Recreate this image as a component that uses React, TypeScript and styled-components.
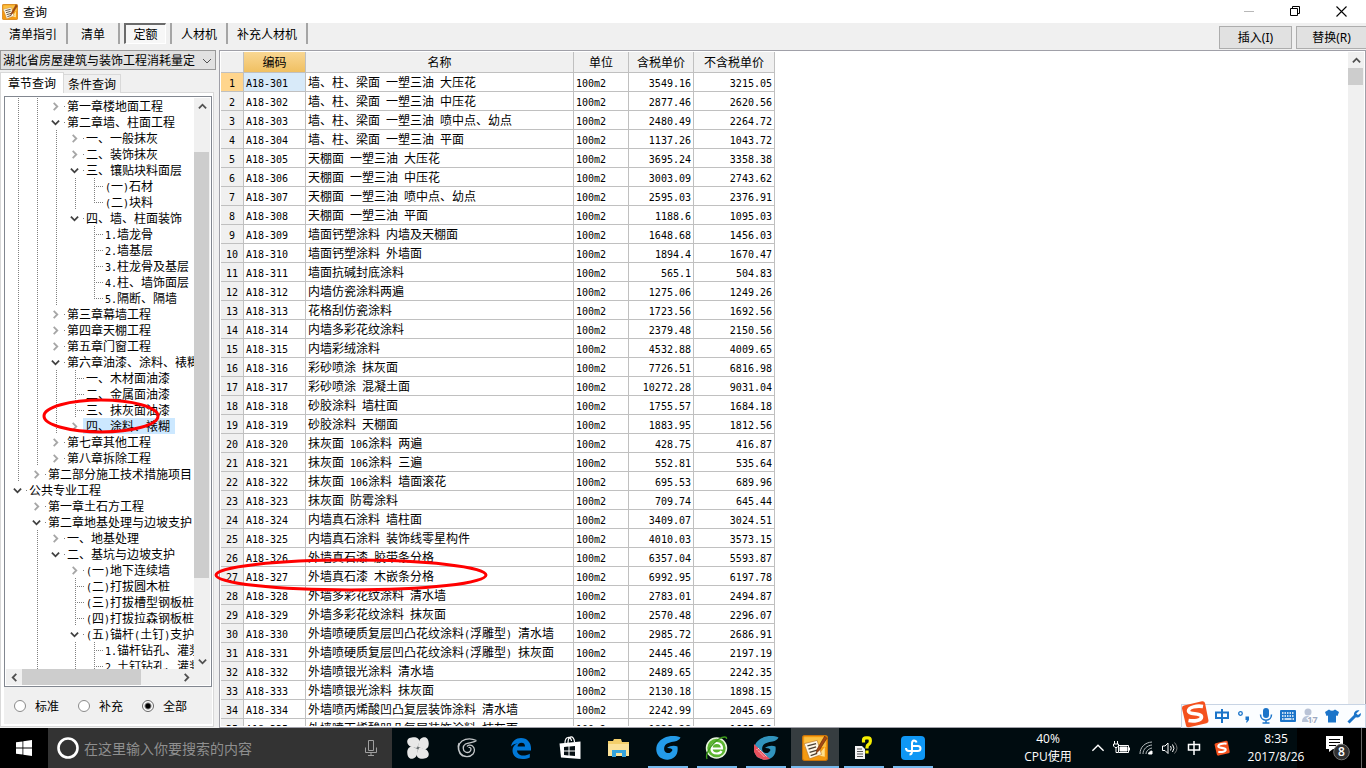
import React from "react";
import styled, { createGlobalStyle, css } from "styled-components";

const GlobalStyle = createGlobalStyle`
  * { box-sizing: border-box; }
  body { margin: 0; overflow: hidden; background: #f0f0f0; }
  button, input, select { font: inherit; color: inherit; margin: 0; }
`;

const Screen = styled.div`
  position: relative;
  display: flex;
  flex-direction: column;
  height: 100vh;
  overflow: hidden;
  color: #000;
  font-family: "Noto Sans CJK SC", sans-serif;
  font-size: 12px;
  line-height: 18px;
`;

const Latin = styled.span`
  font-family: "DejaVu Sans Mono", monospace;
  font-size: 10px;
  line-height: 10px;
  white-space: pre;
`;

/* Latin runs are set in a half-width face beside full-width Chinese. */
function Mixed({ text }: { text: string }) {
  return (
    <>
      {text.split(/([\x20-\x7e]+)/).map((part, i) =>
        i % 2 ? <Latin key={i}>{part}</Latin> : part
      )}
    </>
  );
}

/* ---------- title bar ---------- */

const TitleBar = styled.header`
  display: flex;
  align-items: center;
  flex: none;
  height: 23px;
  padding: 0 2px;
  gap: 5px;
  background: #fff;
`;

const Title = styled.h1`
  flex: 1;
  margin: 0;
  font-size: 12px;
  font-weight: 400;
  line-height: 22px;
`;

const WindowButtons = styled.div`
  display: flex;
`;

const WindowButton = styled.button`
  display: grid;
  place-items: center;
  width: 46px;
  height: 20px;
  padding: 0;
  border: 0;
  background: transparent;
`;

/* ---------- toolbar ---------- */

const Toolbar = styled.nav`
  display: flex;
  flex: none;
  height: 27px;
  background: #f0f0f0;
`;

const ToolTabs = styled.div`
  display: flex;
  flex: 1;
  height: 21px;
`;

const ToolCell = styled.div`
  display: flex;
  min-width: 52px;
  padding: 0 4px;
  border-right: 2px solid #a5a5a5;
`;

const ToolTab = styled.button<{ $pressed?: boolean }>`
  flex: 1;
  padding: 0 4px;
  border: 1px solid transparent;
  background: transparent;
  line-height: 18px;
  ${(p) =>
    p.$pressed &&
    css`
      border: 1px solid #fff;
      border-top: 2px solid #6b6b6b;
      border-left: 2px solid #6b6b6b;
      background: #f7f7f7;
    `}
`;

const Actions = styled.div`
  display: flex;
  gap: 4px;
  padding-top: 3px;
`;

const ActionButton = styled.button<{ $flush?: boolean }>`
  width: ${(p) => (p.$flush ? "70px" : "73px")};
  height: 23px;
  padding: 0;
  border: 1px solid #adadad;
  ${(p) => p.$flush && "border-right: 0;"}
  background: #e1e1e1;
  font-family: "Noto Sans", "Noto Sans CJK SC", sans-serif;
`;

/* ---------- main split ---------- */

const Main = styled.main`
  display: flex;
  flex: 1;
  min-height: 0;
`;

const Side = styled.aside`
  display: flex;
  flex-direction: column;
  flex: none;
  width: 219px;
  padding-right: 3px;
`;

const Combo = styled.div`
  display: flex;
  flex: none;
  position: relative;
  height: 20px;
  svg {
    position: absolute;
    right: 4px;
    top: 6px;
    pointer-events: none;
  }
`;

const Select = styled.select`
  appearance: none;
  width: 100%;
  padding: 0 18px 0 2px;
  border: 1px solid #999;
  border-radius: 0;
  background: #e1e1e1;
  line-height: 18px;
`;

const TabStrip = styled.div`
  display: flex;
  align-items: flex-end;
  flex: none;
  height: 23px;
  padding-top: 2px;
`;

const SideTab = styled.button<{ $active?: boolean }>`
  position: relative;
  height: ${(p) => (p.$active ? "21px" : "19px")};
  padding: 0 7px;
  border: 1px solid #d9d9d9;
  border-bottom: 0;
  background: ${(p) => (p.$active ? "#fff" : "#f0f0f0")};
  line-height: 18px;
  ${(p) => p.$active && "z-index: 1;"}
  ${(p) => !p.$active && "border-left: 0; padding: 0 4px;"}
`;

const Pane = styled.section`
  display: flex;
  flex-direction: column;
  flex: 1;
  min-height: 0;
  margin: -1px 2px 1px 0;
  padding: 3px 1px 2px 3px;
  border: 1px solid #d9d9d9;
  background: #fff;
`;

const TreeBox = styled.div`
  display: grid;
  grid-template: minmax(0, 1fr) 16px / minmax(0, 1fr) 16px;
  flex: 1;
  min-height: 0;
  padding: 1px;
  border: 1px solid #828790;
  background: #fff;
`;

const TreeList = styled.ul`
  margin: 0;
  padding: 0 0 0 3px;
  list-style: none;
  overflow: hidden;
`;

const TreeRow = styled.li`
  display: flex;
  height: 16px;
  line-height: 16px;
  white-space: nowrap;
`;

type Kind = "blank" | "line" | "tee" | "elbow" | "node";

const vertical =
  "repeating-linear-gradient(#808080 0 1px, transparent 1px 2px) 9px 0 / 1px 16px no-repeat";
const half =
  "repeating-linear-gradient(#808080 0 1px, transparent 1px 2px) 9px 0 / 1px 9px no-repeat";
const across =
  "repeating-linear-gradient(90deg, #808080 0 1px, transparent 1px 2px) 9px 8px / 9px 1px no-repeat";
const dot = "linear-gradient(#808080, #808080) 17px 8px / 1px 1px no-repeat";

const guides: Record<Kind, string> = {
  blank: "none",
  line: vertical,
  tee: `${vertical}, ${across}`,
  elbow: `${half}, ${across}`,
  node: dot,
};

const Guide = styled.span<{ $kind: Kind }>`
  display: grid;
  place-items: center;
  flex: none;
  width: 19px;
  height: 16px;
  padding-right: 2px;
  background: ${(p) => guides[p.$kind]};
`;

const TreeLabel = styled.span<{ $selected?: boolean }>`
  margin-left: -2px;
  padding: 0 5px 0 3px;
  background: ${(p) => (p.$selected ? "#cce8ff" : "transparent")};
`;

const ScrollBar = styled.div<{ $horizontal?: boolean }>`
  display: flex;
  flex-direction: ${(p) => (p.$horizontal ? "row" : "column")};
  background: #f0f0f0;
`;

const ScrollButton = styled.button`
  display: grid;
  place-items: center;
  flex: none;
  width: 16px;
  height: 16px;
  padding: 0;
  border: 0;
  background: transparent;
`;

const Spacer = styled.div<{ $grow: number }>`
  flex: ${(p) => p.$grow} 1 0;
`;

const Thumb = styled.div<{ $grow: number; $trim?: boolean }>`
  flex: ${(p) => p.$grow} 1 0;
  ${(p) => p.$trim && "margin-right: 1px;"}
  background: #cdcdcd;
`;

const Corner = styled.div`
  background: #f0f0f0;
`;

const Filters = styled.div`
  display: flex;
  flex: none;
  height: 37px;
  padding-left: 10px;
  background: #f0f0f0;
`;

const RadioLabel = styled.label`
  display: flex;
  align-items: center;
  gap: 9px;
  width: 64px;
`;

const Radio = styled.input`
  appearance: none;
  width: 12px;
  height: 12px;
  border: 1px solid #8a8a8a;
  border-radius: 50%;
  background: #fff;
  &:checked {
    border-color: #666;
    background: radial-gradient(circle, #000 0 2px, #fff 4px);
  }
`;

/* ---------- data grid ---------- */

const GridFrame = styled.section`
  display: flex;
  flex: 1;
  min-width: 0;
  padding: 1px;
  border: 1px solid #a0a0a8;
  background: #fff;
  overflow: hidden;
`;

const GridBody = styled.div`
  flex: 1;
  min-width: 0;
  overflow: hidden;
`;

const Table = styled.table`
  table-layout: fixed;
  width: 554px;
  border-collapse: separate;
  border-spacing: 0;
`;

const Col = styled.col<{ $w: number }>`
  width: ${(p) => p.$w}px;
`;

const HeadCell = styled.th<{ $active?: boolean }>`
  height: 21px;
  padding: 0;
  border-right: 1px solid #c0c0c0;
  border-bottom: 1px solid #c0c0c0;
  background: ${(p) => (p.$active ? "linear-gradient(#f9d793, #f0c062)" : "#f0f0f0")};
  font-weight: 400;
`;

const RowHead = styled.th<{ $active?: boolean }>`
  height: 19px;
  padding: 0;
  border-right: 1px solid #c0c0c0;
  border-bottom: 1px solid #c0c0c0;
  background: ${(p) => (p.$active ? "#ffd58d" : "#f0f0f0")};
  font-weight: 400;
  line-height: 16px;
`;

const Cell = styled.td<{ $right?: boolean; $active?: boolean }>`
  height: 19px;
  padding: 0 2px;
  border-right: 1px solid #c0c0c0;
  border-bottom: 1px solid #c0c0c0;
  background: ${(p) => (p.$active ? "#d8eaf9" : "#fff")};
  text-align: ${(p) => (p.$right ? "right" : "left")};
  line-height: 16px;
  white-space: nowrap;
  overflow: hidden;
`;

/* ---------- overlays ---------- */

const Marks = styled.svg`
  position: absolute;
  left: 0;
  top: 0;
  pointer-events: none;
`;

const ImeBar = styled.div`
  position: absolute;
  right: 0;
  bottom: 40px;
  display: flex;
  align-items: center;
  height: 24px;
  padding-left: 29px;
  border: 1px solid #c8d4e4;
  background: #fbfdff;
`;

const ImeLogo = styled.span`
  position: absolute;
  left: -1px;
  bottom: -1px;
  display: flex;
`;

const ImeItem = styled.button`
  display: grid;
  place-items: center;
  width: 22px;
  height: 22px;
  padding: 0;
  border: 0;
  background: transparent;
`;

/* ---------- taskbar ---------- */

const TaskBar = styled.footer`
  display: flex;
  flex: none;
  height: 40px;
  background: linear-gradient(to left, #000 69px, #000c10 69px);
  color: #fff;
`;

const StartButton = styled.button`
  display: grid;
  place-items: center;
  width: 48px;
  padding: 0;
  border: 0;
  background: #000;
`;

const SearchBox = styled.label`
  display: flex;
  align-items: center;
  width: 344px;
  padding: 0 14px 0 8px;
  gap: 4px;
  background: #333;
`;

const SearchInput = styled.input`
  flex: 1;
  min-width: 0;
  padding: 0;
  border: 0;
  outline: 0;
  background: transparent;
  font-size: 14px;
  &::placeholder {
    color: #8f8f8f;
    opacity: 1;
  }
`;

const AppGroup = styled.div<{ $before: number }>`
  display: flex;
  gap: 1px;
  margin-left: ${(p) => p.$before}px;
`;

const AppButton = styled.button<{ $running?: boolean; $active?: boolean }>`
  display: flex;
  flex-direction: column;
  align-items: center;
  width: 48px;
  height: 40px;
  padding: 7px 0 0;
  gap: 5px;
  border: 0;
  background: ${(p) => (p.$active ? "#363d40" : "transparent")};
  &::after {
    content: "";
    width: ${(p) => (p.$active ? "48px" : "40px")};
    height: 2px;
    background: ${(p) => (p.$running || p.$active ? "#76b9ed" : "transparent")};
  }
  svg {
    flex: none;
  }
`;

const Tray = styled.div`
  display: flex;
  flex: 1;
  justify-content: flex-end;
  font-family: "Open Sans", "Noto Sans CJK SC", sans-serif;
`;

const TrayText = styled.div<{ $w: number }>`
  width: ${(p) => p.$w}px;
  padding-top: 2px;
  text-align: center;
`;

const TrayButton = styled.button<{ $w?: number }>`
  display: grid;
  place-items: center;
  width: ${(p) => p.$w ?? 24}px;
  padding: 0;
  border: 0;
  background: transparent;
`;

const ShowDesktop = styled.button`
  width: 5px;
  padding: 0;
  border: 0;
  border-left: 1px solid #666;
  background: #000;
`;

/* ---------- icons ---------- */

type Dir = "up" | "down" | "left" | "right";
const turns: Record<Dir, number> = { up: 180, down: 0, left: 90, right: 270 };

function Chevron({ dir, color = "#505050", size = 9, weight = 2 }: { dir: Dir; color?: string; size?: number; weight?: number }) {
  return (
    <svg width={size} height={size} viewBox="0 0 10 10" aria-hidden>
      <path d="M1 3l4 4 4-4" fill="none" stroke={color} strokeWidth={weight} transform={`rotate(${turns[dir]} 5 5)`} />
    </svg>
  );
}

function NotePad({ size }: { size: number }) {
  return (
    <svg width={size} height={size} viewBox="0 0 24 24" aria-hidden>
      <rect x="0.5" y="0.5" width="23" height="23" rx="2" fill="#f59a10" stroke="#c8730a" />
      <rect x="2" y="2" width="20" height="9" fill="#fbc043" />
      <path d="M15 19l6-8v9z" fill="#ffe08a" />
      <path d="M2 8l12-3 4 13-11 4z" fill="#fff8e6" stroke="#b9762a" strokeWidth="0.6" />
      <path d="M5 10l8-2M6 13l7-2M7 16l7-2M8 19l6-2" stroke="#4a4035" strokeWidth="1.3" />
      <path d="M21 1l-7 12-1 4 3-3 7-11z" fill="#a54814" stroke="#6b2a08" strokeWidth="0.6" />
    </svg>
  );
}

function SogouLogo({ size }: { size: number }) {
  return (
    <svg width={size} height={size} viewBox="0 0 28 28" aria-hidden>
      <path d="M3 5.5L21 1.2Q23.400 0.800 24 3L27.500 20.500Q27.800 22.600 25.500 23.300L8 27.300Q5.500 27.700 5 25.500L1 8.500Q0.600 6.200 3 5.500z" fill="#f4511e" />
      <path d="M22 6.500C16 5.500 7.500 7 7.500 11C7.500 15 20.500 12.500 20.500 17C20.500 20.500 13 21.500 7.500 20.500" fill="none" stroke="#fff" strokeWidth="3.600" />
    </svg>
  );
}

function Swirl({ color, children }: { color: string; children?: React.ReactNode }) {
  return (
    <svg width="26" height="26" viewBox="0 0 26 26" aria-hidden>
      <path
        d="M25.500 2.500C21 0.500 14 0.500 9 3C3 6 0.500 11 1.500 16.500C2.500 22 8 25.500 14 24.500C20.500 23.500 23.500 18.500 22.500 11.500C19.500 10 15 10.500 12 13C15 12.800 17 13.500 17.500 15C16.500 17.200 14.500 18.500 12.500 18C9.500 17.500 8.500 14.500 9.500 11.500C11 8 15.500 7 19.500 6.500C22.500 6 24.500 4.500 25.500 2.500z"
        fill={color}
      />
      {children}
    </svg>
  );
}

function PinwheelIcon() {
  return (
    <svg width="26" height="26" viewBox="0 0 26 26" fill="#e8e8e8" aria-hidden>
      {[0, 90, 180, 270].map((a) => (
        <path key={a} d="M12.600 12.800C8 13.300 3 11.500 2.300 7.500C1.800 4 4.500 2.500 8 2.300C12 2 14.600 4 14.300 7C14 9 12.800 10 12.600 12.800z" transform={`rotate(${a} 13 13)`} />
      ))}
    </svg>
  );
}

function OutlineSwirlIcon() {
  return (
    <svg width="26" height="26" viewBox="0 0 26 26" fill="none" stroke="#c4c8ca" strokeWidth="1.300" aria-hidden>
      <path d="M22.500 5.500C18 3.500 12 3.500 8 6C4 9 3.500 14.500 6.500 18.500C9.500 22.500 16 22.500 19 19C21 16.500 21 13 18.500 11C16.500 9.500 14 10 13 11.500M22.500 5.500C20 8 15 7 11.500 9C8.500 11 8.500 15.500 11.500 17C14 18.200 17 17 17 14C17 13 16 12 14.500 12.500M5 8C3.500 11 4 18 8.500 21" />
    </svg>
  );
}

function EdgeIcon() {
  return (
    <svg width="26" height="26" viewBox="0 0 26 26" aria-hidden>
      <path d="M3 11.500C4 6 8 3 13 3C19.500 3 23 8 23 13V15.500H9C9.300 19 12 20.500 15 20.500C18 20.500 20 19.700 21.800 18.700V22.500C19.500 23.700 17 24 14.500 24C8.500 24 4.500 20.500 4.500 15.500C4.500 12 6.500 9.300 10 8.200C7 8.500 4.500 9.700 3 11.500zM9.500 11.500H17C17 9.500 16 7.800 13.500 7.800C11.300 7.800 9.800 9.200 9.500 11.500z" fill="#0078d7" />
    </svg>
  );
}

function StoreIcon() {
  return (
    <svg width="26" height="26" viewBox="0 0 26 26" aria-hidden>
      <path d="M8 8C8 1 14 1 14.500 6M11 8C11 0 17 0 17.500 7" fill="none" stroke="#fff" strokeWidth="1.200" />
      <path d="M2.500 8.500L23.500 6.500V24L4 22.500z" fill="#fff" />
      <path d="M7 12l4.500-.5v4H7zM12.500 11.400L18 11v4.500h-5.500zM7 16.500h4.500v4L7 20zM12.500 16.500H18V21l-5.500-.5z" fill="#071014" />
    </svg>
  );
}

function FolderIcon() {
  return (
    <svg width="26" height="26" viewBox="0 0 26 26" aria-hidden>
      <path d="M2 6h5l1-2h7l1 3h7v14H2z" fill="#f3cf6b" />
      <path d="M2 9h21v12H2z" fill="#fbe299" />
      <path d="M6 22v-7h14v7h-4v-4h-6v4z" fill="#35a3dc" />
    </svg>
  );
}

function GreenBrowserIcon() {
  return (
    <svg width="26" height="26" viewBox="0 0 26 26" aria-hidden>
      <circle cx="12.500" cy="13" r="10" fill="#5cb531" stroke="#e7f5dd" strokeWidth="1.500" />
      <path d="M7.500 13.500H18C18 10 16 8 12.800 8C9.500 8 7.500 10.500 7.500 13.500C7.500 16.500 9.500 18.500 13 18.500C15 18.500 16.800 17.700 17.500 16" fill="none" stroke="#fff" strokeWidth="2.200" />
      <path d="M3 24C1 20 6 10 15 4C19 1.500 23 1 22.500 4" fill="none" stroke="#3c9a1b" strokeWidth="1.400" />
    </svg>
  );
}

function HelpDocIcon() {
  return (
    <svg width="26" height="26" viewBox="0 0 26 26" aria-hidden>
      <path d="M4 11h7l3 3v10H4z" fill="#f4f4f4" />
      <path d="M6 14h5M6 16.500h6M6 19h6M6 21.500h6" stroke="#555" strokeWidth="1" />
      <path d="M12.500 7.500V5Q12.500 2.800 15 2.800H17Q19.300 2.800 19.300 5V6.500Q19.300 8.500 17.500 9.500Q16 10.300 16 12.500V13.500M16 15.500V18.500" fill="none" stroke="#f7ef00" strokeWidth="3.200" />
    </svg>
  );
}

function BlueKnotIcon() {
  return (
    <svg width="26" height="26" viewBox="0 0 26 26" aria-hidden>
      <rect x="1" y="1" width="24" height="24" rx="4" fill="#0f97f5" />
      <path d="M16.500 7.500Q16 5.500 14 5.500Q12 5.700 12 8.500V16Q12 19.500 9.500 19.500M6 13Q6 16 9 16H17.500Q20.500 16 20.500 13.500Q20.500 11 18 11H12" fill="none" stroke="#fff" strokeWidth="2" />
    </svg>
  );
}

const blue = "#1b74c9";

/* ---------- data ---------- */

type Item = { guide: string; text: string; selected: boolean };

/* One letter per column: l line, b blank, t tee, e elbow, > closed node, v open node */
const tree: Item[] = (
  [
    ["ll>", "第一章楼地面工程"],
    ["llv", "第二章墙、柱面工程"],
    ["lll>", "一、一般抹灰"],
    ["lll>", "二、装饰抹灰"],
    ["lllv", "三、镶贴块料面层"],
    ["llllt", "(一)石材"],
    ["lllle", "(二)块料"],
    ["lllv", "四、墙、柱面装饰"],
    ["lllbt", "1.墙龙骨"],
    ["lllbt", "2.墙基层"],
    ["lllbt", "3.柱龙骨及基层"],
    ["lllbt", "4.柱、墙饰面层"],
    ["lllbe", "5.隔断、隔墙"],
    ["ll>", "第三章幕墙工程"],
    ["ll>", "第四章天棚工程"],
    ["ll>", "第五章门窗工程"],
    ["llv", "第六章油漆、涂料、裱糊"],
    ["lllt", "一、木材面油漆"],
    ["lllt", "二、金属面油漆"],
    ["lllt", "三、抹灰面油漆"],
    ["lll>", "四、涂料、裱糊"],
    ["ll>", "第七章其他工程"],
    ["ll>", "第八章拆除工程"],
    ["l>", "第二部分施工技术措施项目"],
    ["v", "公共专业工程"],
    ["b>", "第一章土石方工程"],
    ["bv", "第二章地基处理与边坡支护"],
    ["bl>", "一、地基处理"],
    ["blv", "二、基坑与边坡支护"],
    ["blb>", "(一)地下连续墙"],
    ["blbt", "(二)打拔圆木桩"],
    ["blbt", "(三)打拔槽型钢板桩"],
    ["blbt", "(四)打拔拉森钢板桩"],
    ["blbv", "(五)锚杆(土钉)支护"],
    ["blblt", "1.锚杆钻孔、灌浆"],
    ["blblt", "2.土钉钻孔、灌浆"],
  ] as [string, string][]
).map(([guide, text]) => ({ guide, text, selected: text === "四、涂料、裱糊" }));

const kinds: Record<string, Kind> = { l: "line", b: "blank", t: "tee", e: "elbow", ">": "node", v: "node" };

const rows: [string, string, string][] = [
  ["墙、柱、梁面 一塑三油 大压花", "3549.16", "3215.05"],
  ["墙、柱、梁面 一塑三油 中压花", "2877.46", "2620.56"],
  ["墙、柱、梁面 一塑三油 喷中点、幼点", "2480.49", "2264.72"],
  ["墙、柱、梁面 一塑三油 平面", "1137.26", "1043.72"],
  ["天棚面 一塑三油 大压花", "3695.24", "3358.38"],
  ["天棚面 一塑三油 中压花", "3003.09", "2743.62"],
  ["天棚面 一塑三油 喷中点、幼点", "2595.03", "2376.91"],
  ["天棚面 一塑三油 平面", "1188.6", "1095.03"],
  ["墙面钙塑涂料 内墙及天棚面", "1648.68", "1456.03"],
  ["墙面钙塑涂料 外墙面", "1894.4", "1670.47"],
  ["墙面抗碱封底涂料", "565.1", "504.83"],
  ["内墙仿瓷涂料两遍", "1275.06", "1249.26"],
  ["花格刮仿瓷涂料", "1723.56", "1692.56"],
  ["内墙多彩花纹涂料", "2379.48", "2150.56"],
  ["内墙彩绒涂料", "4532.88", "4009.65"],
  ["彩砂喷涂 抹灰面", "7726.51", "6816.98"],
  ["彩砂喷涂 混凝土面", "10272.28", "9031.04"],
  ["砂胶涂料 墙柱面", "1755.57", "1684.18"],
  ["砂胶涂料 天棚面", "1883.95", "1812.56"],
  ["抹灰面 106涂料 两遍", "428.75", "416.87"],
  ["抹灰面 106涂料 三遍", "552.81", "535.64"],
  ["抹灰面 106涂料 墙面滚花", "695.53", "689.96"],
  ["抹灰面 防霉涂料", "709.74", "645.44"],
  ["内墙真石涂料 墙柱面", "3409.07", "3024.51"],
  ["内墙真石涂料 装饰线零星构件", "4010.03", "3573.15"],
  ["外墙真石漆 胶带条分格", "6357.04", "5593.87"],
  ["外墙真石漆 木嵌条分格", "6992.95", "6197.78"],
  ["外墙多彩花纹涂料 清水墙", "2783.01", "2494.87"],
  ["外墙多彩花纹涂料 抹灰面", "2570.48", "2296.07"],
  ["外墙喷硬质复层凹凸花纹涂料(浮雕型) 清水墙", "2985.72", "2686.91"],
  ["外墙喷硬质复层凹凸花纹涂料(浮雕型) 抹灰面", "2445.46", "2197.19"],
  ["外墙喷银光涂料 清水墙", "2489.65", "2242.35"],
  ["外墙喷银光涂料 抹灰面", "2130.18", "1898.15"],
  ["外墙喷丙烯酸凹凸复层装饰涂料 清水墙", "2242.99", "2045.69"],
  ["外墙喷丙烯酸凹凸复层装饰涂料 抹灰面", "1828.28", "1665.22"],
];

export default function App() {
  return (
    <Screen>
      <GlobalStyle />
      <TitleBar>
        <NotePad size={16} />
        <Title>查询</Title>
        <WindowButtons>
          <WindowButton aria-label="最小化">
            <svg width="11" height="11"><path d="M0 5.500h10" stroke="#b8b8b8" /></svg>
          </WindowButton>
          <WindowButton aria-label="还原">
            <svg width="11" height="11" fill="none" stroke="#000">
              <path d="M0.500 2.500h7v7h-7zM2.500 2.500v-2h7v7h-2" />
            </svg>
          </WindowButton>
          <WindowButton aria-label="关闭">
            <svg width="11" height="11"><path d="M0.500 0.500l10 10M10.500 0.500l-10 10" stroke="#000" strokeWidth="1.100" /></svg>
          </WindowButton>
        </WindowButtons>
      </TitleBar>

      <Toolbar>
        <ToolTabs>
          {["清单指引", "清单", "定额", "人材机", "补充人材机"].map((name) => (
            <ToolCell key={name}>
              <ToolTab $pressed={name === "定额"}>{name}</ToolTab>
            </ToolCell>
          ))}
        </ToolTabs>
        <Actions>
          <ActionButton>插入(I)</ActionButton>
          <ActionButton $flush>替换(R)</ActionButton>
        </Actions>
      </Toolbar>

      <Main>
        <Side>
          <Combo>
            <Select aria-label="定额库">
              <option>湖北省房屋建筑与装饰工程消耗量定</option>
            </Select>
            <Chevron dir="down" weight={1} size={10} />
          </Combo>
          <TabStrip>
            <SideTab $active>章节查询</SideTab>
            <SideTab>条件查询</SideTab>
          </TabStrip>
          <Pane>
            <TreeBox>
              <TreeList>
                {tree.map((item) => (
                  <TreeRow key={item.text}>
                    {item.guide.split("").map((g, i) => (
                      <Guide key={i} $kind={kinds[g]}>
                        {g === ">" && <Chevron dir="right" color="#a6a6a6" />}
                        {g === "v" && <Chevron dir="down" color="#404040" />}
                      </Guide>
                    ))}
                    <TreeLabel $selected={item.selected}>
                      <Mixed text={item.text} />
                    </TreeLabel>
                  </TreeRow>
                ))}
              </TreeList>
              <ScrollBar>
                <ScrollButton aria-label="向上"><Chevron dir="up" /></ScrollButton>
                <Spacer $grow={38} />
                <Thumb $grow={426} $trim />
                <Spacer $grow={75} />
                <ScrollButton aria-label="向下"><Chevron dir="down" /></ScrollButton>
              </ScrollBar>
              <ScrollBar $horizontal>
                <ScrollButton aria-label="向左"><Chevron dir="left" /></ScrollButton>
                <Thumb $grow={117} />
                <Spacer $grow={37} />
                <ScrollButton aria-label="向右"><Chevron dir="right" /></ScrollButton>
              </ScrollBar>
              <Corner />
            </TreeBox>
            <Filters>
              {["标准", "补充", "全部"].map((name) => (
                <RadioLabel key={name}>
                  <Radio type="radio" name="scope" defaultChecked={name === "全部"} />
                  {name}
                </RadioLabel>
              ))}
            </Filters>
          </Pane>
        </Side>

        <GridFrame>
          <GridBody>
            <Table>
              <colgroup>
                {[23, 62, 268, 55, 65, 81].map((w, i) => <Col key={i} $w={w} />)}
              </colgroup>
              <thead>
                <tr>
                  <HeadCell aria-label="序号" />
                  <HeadCell $active>编码</HeadCell>
                  <HeadCell>名称</HeadCell>
                  <HeadCell>单位</HeadCell>
                  <HeadCell>含税单价</HeadCell>
                  <HeadCell>不含税单价</HeadCell>
                </tr>
              </thead>
              <tbody>
                {rows.map(([name, taxed, untaxed], i) => (
                  <tr key={i}>
                    <RowHead scope="row" $active={i === 0}><Latin>{i + 1}</Latin></RowHead>
                    <Cell $active={i === 0}><Latin>{`A18-${301 + i}`}</Latin></Cell>
                    <Cell><Mixed text={name} /></Cell>
                    <Cell><Latin>100m2</Latin></Cell>
                    <Cell $right><Latin>{taxed}</Latin></Cell>
                    <Cell $right><Latin>{untaxed}</Latin></Cell>
                  </tr>
                ))}
              </tbody>
            </Table>
          </GridBody>
          <ScrollBar>
            <ScrollButton aria-label="向上"><Chevron dir="up" /></ScrollButton>
            <Thumb $grow={17} $trim />
            <Spacer $grow={640} />
          </ScrollBar>
        </GridFrame>
      </Main>

      <TaskBar>
        <StartButton aria-label="开始">
          <svg width="16" height="16" viewBox="0 0 16 16" fill="#fff">
            <path d="M0 2.300L6.500 1.400V7.600H0zM7.300 1.300L16 0V7.600H7.300zM0 8.400H6.500V14.600L0 13.700zM7.300 8.400H16V16L7.300 14.700z" />
          </svg>
        </StartButton>
        <SearchBox>
          <svg width="24" height="24" fill="none" stroke="#fff">
            <circle cx="12" cy="12" r="9.500" strokeWidth="2.600" />
          </svg>
          <SearchInput aria-label="搜索" placeholder="在这里输入你要搜索的内容" />
          <svg width="14" height="18" viewBox="0 0 14 18" fill="none" stroke="#a0a0a0">
            <path d="M4.500 1.500h5v10h-5zM1.500 8.500v5h11v-5M7 13.500v3M4 16.500h6" />
          </svg>
        </SearchBox>
        <AppGroup $before={2}>
          <AppButton aria-label="风车"><PinwheelIcon /></AppButton>
          <AppButton aria-label="旋风"><OutlineSwirlIcon /></AppButton>
        </AppGroup>
        <AppGroup $before={6}>
          <AppButton aria-label="Edge"><EdgeIcon /></AppButton>
          <AppButton aria-label="应用商店"><StoreIcon /></AppButton>
          <AppButton aria-label="文件资源管理器"><FolderIcon /></AppButton>
          <AppButton aria-label="广联达" $running><Swirl color="#249be9" /></AppButton>
          <AppButton aria-label="浏览器" $running><GreenBrowserIcon /></AppButton>
          <AppButton aria-label="计价" $running>
            <Swirl color="#3194bd">
              <path d="M1 9L17 24L11 25L4 22L1 17z" fill="#e8505c" />
              <path d="M3.500 14l8 8M5 13l9 9" stroke="#ffd3d6" strokeWidth="1" strokeDasharray="2 1" />
            </Swirl>
          </AppButton>
          <AppButton aria-label="查询" $active><NotePad size={26} /></AppButton>
          <AppButton aria-label="帮助" $running><HelpDocIcon /></AppButton>
          <AppButton aria-label="助手" $running><BlueKnotIcon /></AppButton>
        </AppGroup>
        <Tray>
          <TrayText $w={76}>40%<br />CPU使用</TrayText>
          <TrayButton aria-label="显示隐藏的图标"><Chevron dir="up" color="#fff" size={14} weight={1} /></TrayButton>
          <TrayButton aria-label="电源">
            <svg width="18" height="14" viewBox="0 0 18 14" fill="none" stroke="#fff">
              <path d="M5.500 4.500h10v7h-10zM16.500 6.500v3" />
              <path d="M7 6h7v4H7z" fill="#fff" />
              <path d="M1.500 0v3M4.500 0v3M0.500 3h5v2l-1.500 1.500h-2L0.500 5zM3 6v5.500h2" />
            </svg>
          </TrayButton>
          <TrayButton aria-label="网络">
            <svg width="15" height="14" viewBox="0 0 15 14" fill="none" stroke="#b8bec0">
              <path d="M1 13C1 6 6 1.500 13 1M4 13C4 8 8 4.500 13 4M7 13C7 10 10 7.500 13 7" />
              <path d="M9.500 13C9.500 11.500 11 10 13 10V13z" fill="#fff" stroke="#fff" />
            </svg>
          </TrayButton>
          <TrayButton aria-label="音量">
            <svg width="17" height="14" viewBox="0 0 17 14" fill="none" stroke="#fff">
              <path d="M0.500 5h2.500l3-3v10.500l-3-3H0.500zM8.500 5q1.500 2.200 0 4.500M10.500 3.500q3 3.700 0 7.500" />
              <path d="M12.500 1.500q5 5.700 0 11" stroke="#777" />
            </svg>
          </TrayButton>
          <TrayButton aria-label="输入法">
            <svg width="14" height="14" viewBox="0 0 14 14" fill="none" stroke="#fff" strokeWidth="1.500">
              <path d="M1.500 3.500h11v5.500h-11zM7 0v14" />
            </svg>
          </TrayButton>
          <TrayButton $w={32} aria-label="搜狗"><SogouLogo size={16} /></TrayButton>
          <TrayText $w={76}>8:35<br />2017/8/26</TrayText>
          <TrayButton $w={47} aria-label="8 条新通知">
            <svg width="26" height="26" viewBox="0 0 26 26">
              <path d="M1 1h17v13H8l-4 3v-3H1z" fill="#fff" />
              <path d="M4 4.500h11M4 7.500h11M4 10.500h7" stroke="#000" />
              <circle cx="16.500" cy="17" r="7.800" fill="#303030" stroke="#777" />
              <text x="16.500" y="21" textAnchor="middle" fill="#fff" fontSize="12" fontWeight="600" fontFamily="Open Sans, sans-serif">8</text>
            </svg>
          </TrayButton>
          <ShowDesktop aria-label="显示桌面" />
        </Tray>
      </TaskBar>

      <ImeBar>
        <ImeLogo><SogouLogo size={28} /></ImeLogo>
        <ImeItem aria-label="中文">
          <svg width="16" height="16" viewBox="0 0 16 16" fill="none" stroke={blue} strokeWidth="2">
            <path d="M2 4.500h12v5.500H2zM8 1v14" />
          </svg>
        </ImeItem>
        <ImeItem aria-label="标点">
          <svg width="14" height="14" viewBox="0 0 14 14">
            <circle cx="3.500" cy="4.500" r="1.800" fill="none" stroke={blue} strokeWidth="1.300" />
            <path d="M8.500 7.500h3.500v3.500l-2 2.500h-1l.8-2.500h-1.300z" fill={blue} />
          </svg>
        </ImeItem>
        <ImeItem aria-label="语音">
          <svg width="14" height="16" viewBox="0 0 14 16" fill={blue}>
            <rect x="4" y="0" width="6" height="10" rx="3" />
            <path d="M1.500 6.500C1.500 14 12.500 14 12.500 6.500M7 12v3M3.500 15h7" fill="none" stroke={blue} strokeWidth="1.500" />
          </svg>
        </ImeItem>
        <ImeItem aria-label="软键盘">
          <svg width="16" height="12" viewBox="0 0 16 12">
            <rect width="16" height="12" rx="1" fill={blue} />
            <path d="M2 3h12M2 6h12" stroke="#fff" strokeWidth="1.500" strokeDasharray="1.500 1" />
            <path d="M2 9h1.500M4.500 9h7M12.500 9H14" stroke="#fff" strokeWidth="1.500" />
          </svg>
        </ImeItem>
        <ImeItem aria-label="账号">
          <svg width="18" height="16" viewBox="0 0 18 16" fill="#b9c3d6">
            <circle cx="7" cy="4" r="3.500" />
            <path d="M1 14C1 9 4 8 7 8C10 8 12 9 12 14z" />
            <text x="11.500" y="15" textAnchor="middle" fill="#9ba9c2" stroke="#fff" strokeWidth="2" paintOrder="stroke" fontSize="9" fontWeight="700" fontFamily="Open Sans, sans-serif">17</text>
          </svg>
        </ImeItem>
        <ImeItem aria-label="皮肤">
          <svg width="14" height="14" viewBox="0 0 14 14" fill={blue}>
            <path d="M4 0.500Q7 3 10 0.500L14 3L12.500 7L11 6.500V13.500H3V6.500L1.500 7L0 3z" />
          </svg>
        </ImeItem>
        <ImeItem aria-label="工具">
          <svg width="15" height="15" viewBox="0 0 15 15">
            <path d="M1.500 13.500L8 7" stroke={blue} strokeWidth="3" />
            <path d="M12.500 1.500C9 0 5.500 4 7.500 7.500C10 10 14.500 8 13.800 4L11 6L9.200 4.500z" fill={blue} />
          </svg>
        </ImeItem>
      </ImeBar>

      <Marks width="500" height="600" fill="none" stroke="#f00" strokeWidth="3" aria-hidden>
        <ellipse cx="101" cy="416" rx="57" ry="16" />
        <ellipse cx="351" cy="575" rx="135" ry="15" />
      </Marks>
    </Screen>
  );
}
